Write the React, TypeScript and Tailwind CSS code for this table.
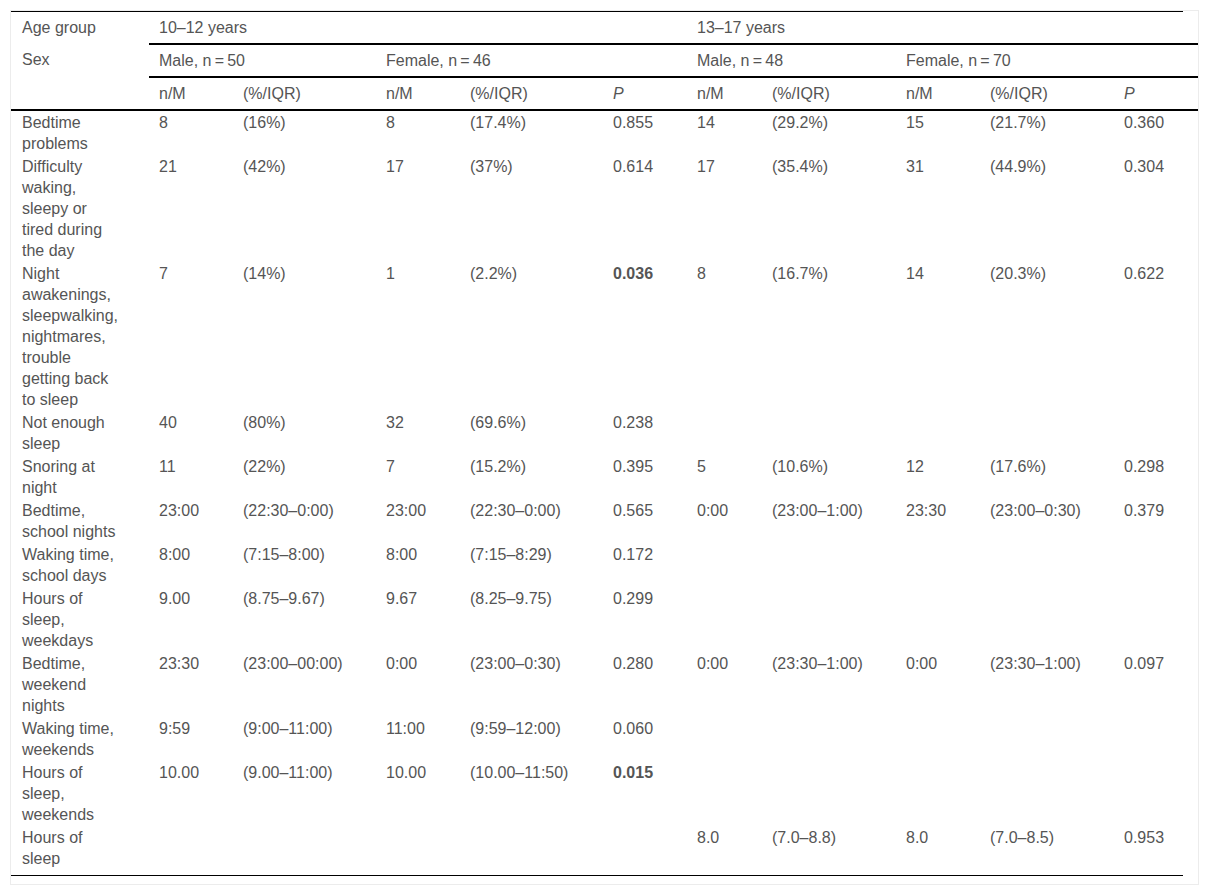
const widths = [138, 84, 143, 84, 143, 84, 75, 134, 84, 134, 84];

type Row = { label: string; cells: string[]; bold?: number };

const rows: Row[] = [
  { label: "Bedtime\nproblems", cells: ["8", "(16%)", "8", "(17.4%)", "0.855", "14", "(29.2%)", "15", "(21.7%)", "0.360"] },
  { label: "Difficulty\nwaking,\nsleepy or\ntired during\nthe day", cells: ["21", "(42%)", "17", "(37%)", "0.614", "17", "(35.4%)", "31", "(44.9%)", "0.304"] },
  {
    label: "Night\nawakenings,\nsleepwalking,\nnightmares,\ntrouble\ngetting back\nto sleep",
    cells: ["7", "(14%)", "1", "(2.2%)", "0.036", "8", "(16.7%)", "14", "(20.3%)", "0.622"],
    bold: 4,
  },
  { label: "Not enough\nsleep", cells: ["40", "(80%)", "32", "(69.6%)", "0.238", "", "", "", "", ""] },
  { label: "Snoring at\nnight", cells: ["11", "(22%)", "7", "(15.2%)", "0.395", "5", "(10.6%)", "12", "(17.6%)", "0.298"] },
  {
    label: "Bedtime,\nschool nights",
    cells: ["23:00", "(22:30–0:00)", "23:00", "(22:30–0:00)", "0.565", "0:00", "(23:00–1:00)", "23:30", "(23:00–0:30)", "0.379"],
  },
  { label: "Waking time,\nschool days", cells: ["8:00", "(7:15–8:00)", "8:00", "(7:15–8:29)", "0.172", "", "", "", "", ""] },
  { label: "Hours of\nsleep,\nweekdays", cells: ["9.00", "(8.75–9.67)", "9.67", "(8.25–9.75)", "0.299", "", "", "", "", ""] },
  {
    label: "Bedtime,\nweekend\nnights",
    cells: ["23:30", "(23:00–00:00)", "0:00", "(23:00–0:30)", "0.280", "0:00", "(23:30–1:00)", "0:00", "(23:30–1:00)", "0.097"],
  },
  { label: "Waking time,\nweekends", cells: ["9:59", "(9:00–11:00)", "11:00", "(9:59–12:00)", "0.060", "", "", "", "", ""] },
  {
    label: "Hours of\nsleep,\nweekends",
    cells: ["10.00", "(9.00–11:00)", "10.00", "(10.00–11:50)", "0.015", "", "", "", "", ""],
    bold: 4,
  },
  { label: "Hours of\nsleep", cells: ["", "", "", "", "", "8.0", "(7.0–8.8)", "8.0", "(7.0–8.5)", "0.953"] },
];

const th = "pl-[10px] py-[5px] text-left font-normal align-top";

export default function App() {
  return (
    <div className="min-h-screen bg-white pt-[10px] font-['Liberation_Sans',Arial,sans-serif] text-[16px] leading-[21px] text-[#555]">
      <div className="mx-[10px] border border-[#ececec] pb-[8px]">
        <div className="h-px w-[1172px] bg-black" />
        <table className="w-full table-fixed border-collapse">
          <colgroup>
            {widths.map((w, i) => (
              <col key={i} style={{ width: w }} />
            ))}
          </colgroup>
          <thead>
            <tr>
              <th className={`${th} pl-[11px]`}>Age group</th>
              <th className={`${th} border-b-2 border-black`} colSpan={5}>
                10–12 years
              </th>
              <th className={`${th} border-b-2 border-black`} colSpan={5}>
                13–17 years
              </th>
            </tr>
            <tr>
              <th className={`${th} pl-[11px]`}>Sex</th>
              <th className={`${th} border-b-2 border-black`} colSpan={2}>
                Male, n{"\u2009"}={"\u2009"}50
              </th>
              <th className={`${th} border-b-2 border-black`} colSpan={3}>
                Female, n{"\u2009"}={"\u2009"}46
              </th>
              <th className={`${th} border-b-2 border-black`} colSpan={2}>
                Male, n{"\u2009"}={"\u2009"}48
              </th>
              <th className={`${th} border-b-2 border-black`} colSpan={3}>
                Female, n{"\u2009"}={"\u2009"}70
              </th>
            </tr>
            <tr className="border-b-2 border-black">
              <th className={th} />
              <th className={th}>n/M</th>
              <th className={th}>(%/IQR)</th>
              <th className={th}>n/M</th>
              <th className={th}>(%/IQR)</th>
              <th className={`${th} italic`}>P</th>
              <th className={th}>n/M</th>
              <th className={th}>(%/IQR)</th>
              <th className={th}>n/M</th>
              <th className={th}>(%/IQR)</th>
              <th className={`${th} italic`}>P</th>
            </tr>
          </thead>
          <tbody>
            {rows.map((row, r) => {
              const last = r === rows.length - 1;
              const pad = last ? "pt-px pb-[6px]" : "py-px";
              return (
                <tr key={r}>
                  <td className={`${pad} pl-[11px] align-top whitespace-pre-line`}>{row.label}</td>
                  {row.cells.map((c, i) => (
                    <td key={i} className={`${pad} pl-[10px] align-top ${row.bold === i ? "font-bold" : ""}`}>
                      {c}
                    </td>
                  ))}
                </tr>
              );
            })}
          </tbody>
        </table>
        <div className="h-px w-[1172px] bg-black" />
      </div>
    </div>
  );
}
